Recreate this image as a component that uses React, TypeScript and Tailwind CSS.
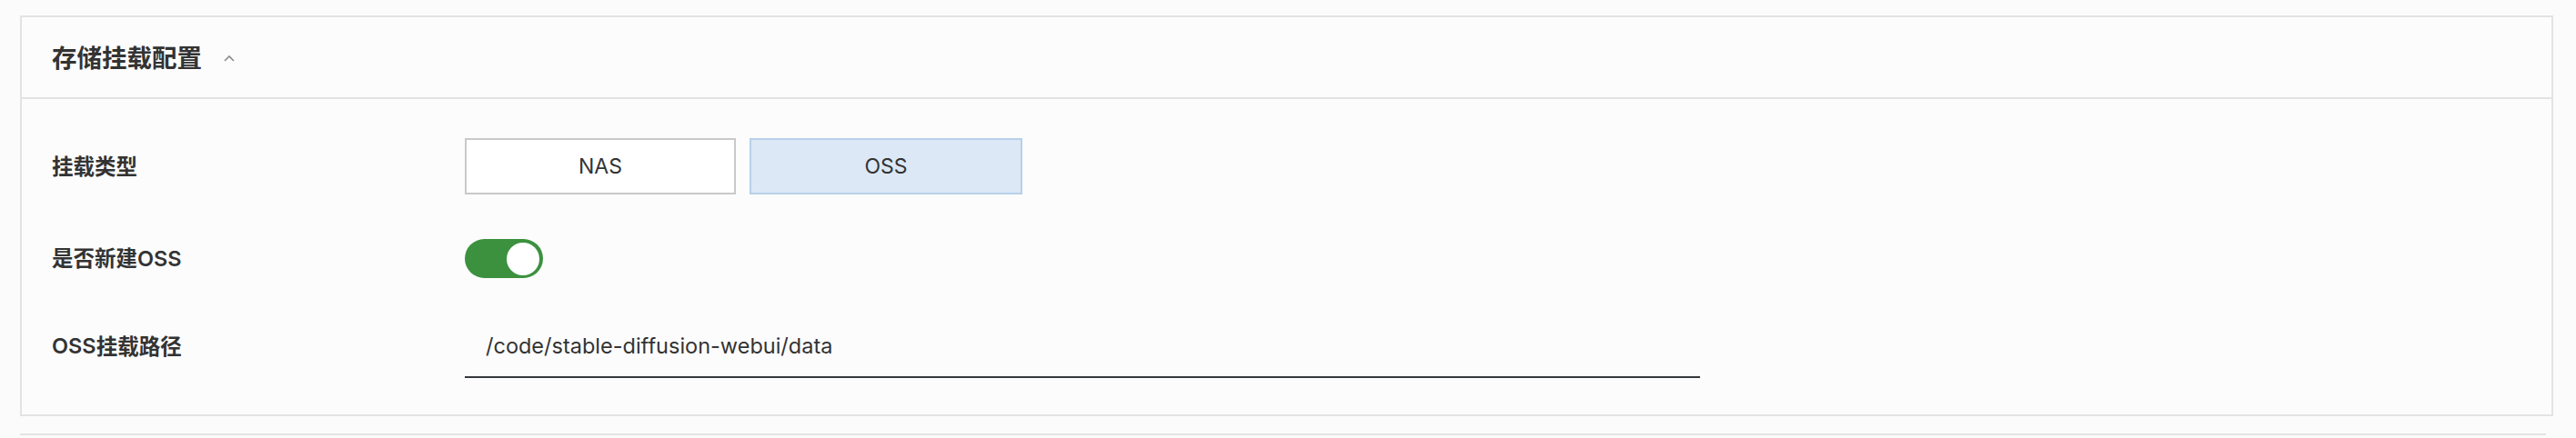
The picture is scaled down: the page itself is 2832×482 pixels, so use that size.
import React from "react";

const cjk = { fontFamily: '"Inter", "Noto Sans CJK SC", sans-serif' };
const cjkOnly = { fontFamily: '"Noto Sans CJK SC", sans-serif' };

export default function App() {
  return (
    <div className="w-full h-[482px] bg-[#fbfbfb] pt-[17px] overflow-hidden" style={cjk}>
      <div className="ml-[22px] w-[2785px] border-2 border-[#e3e3e3] bg-[#fcfcfc]">
        {/* header */}
        <div className="h-[90px] flex items-center pl-[33px] border-b-2 border-[#e3e3e3]">
          <span className="text-[27.5px] font-semibold text-[#333333] leading-none" style={cjkOnly}>
            存储挂载配置
          </span>
          <svg className="ml-[24px] mt-[2px]" width="12" height="8" viewBox="0 0 12 8" fill="none">
            <polyline points="1,7 6,2 11,7" stroke="#8c8c8c" strokeWidth="1.6" />
          </svg>
        </div>
        {/* body */}
        <div className="pl-[33px] pt-[43px] pb-[40px]">
          {/* row 1 */}
          <div className="flex items-center h-[62px]">
            <div className="w-[454px] text-[23.5px] font-semibold text-[#333333]" style={cjkOnly}>
              挂载类型
            </div>
            <div className="flex gap-[15px]">
              <div className="w-[298px] h-[62px] border-2 border-[#c9c9c9] bg-white flex items-center justify-center text-[23px] text-[#333333]">
                NAS
              </div>
              <div className="w-[300px] h-[62px] border-2 border-[#b6d0ea] bg-[#dce8f5] flex items-center justify-center text-[23px] text-[#333333]">
                OSS
              </div>
            </div>
          </div>
          {/* row 2 */}
          <div className="flex items-center h-[43px] mt-[49px]">
            <div className="w-[454px] text-[23.5px] font-semibold text-[#333333]">
              <span style={cjkOnly}>是否新建</span>
              <span>OSS</span>
            </div>
            <div className="w-[86px] h-[43px] rounded-full bg-[#3c913f] flex items-center justify-end pr-[4px]">
              <div className="w-[36px] h-[36px] rounded-full bg-white" />
            </div>
          </div>
          {/* row 3 */}
          <div className="flex items-start mt-[52px]">
            <div className="w-[454px] h-[46px] flex items-center text-[23.5px] font-semibold text-[#333333]">
              <span>OSS</span>
              <span style={cjkOnly}>挂载路径</span>
            </div>
            <div className="w-[1358px] h-[58px] border-b-2 border-[#35383b] pb-[10px] pl-[23px] flex items-center text-[23.5px] text-[#333333]">
              /code/stable-diffusion-webui/data
            </div>
          </div>
        </div>
      </div>
      <div className="ml-[22px] w-[2777px] mt-[19px] border-t-2 border-[#e3e3e3]" />
    </div>
  );
}
